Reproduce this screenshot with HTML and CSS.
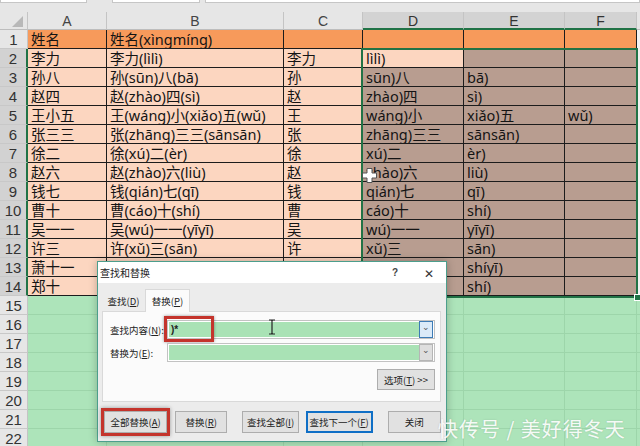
FILE: index.html
```html
<!DOCTYPE html>
<html lang="zh-CN">
<head>
    <meta charset="UTF-8">
    <meta name="viewport" content="width=device-width, initial-scale=1.0">
    <title>查找和替换 - 拼音拆分</title>
    <link rel="stylesheet" href="styles.css">
</head>
<body>
    <div class="app">
        <div class="toolbar">
            <span class="box name-box"></span>
            <span class="box fx-box"></span>
            <span class="box formula-box"></span>
        </div>

        <div class="grid" id="grid">
            <!-- cells are built by the script below -->
        </div>

        <div class="selection"><span class="fill-handle"></span></div>

        <svg class="move-cursor" width="15" height="15" viewBox="0 0 15 15">
            <path d="M5 0.5h5v4.5h4.5v5H10v4.5H5V10H0.5V5H5z" fill="#fff" stroke="#555" stroke-width="1"/>
        </svg>

        <div class="dialog">
            <div class="dialog-title">
                <span class="dialog-name">查找和替换</span>
                <span class="dialog-help">?</span>
                <span class="dialog-close">✕</span>
            </div>
            <div class="dialog-body">
                <div class="tabs">
                    <span class="tab">查找(<u>D</u>)</span>
                    <span class="tab tab-active">替换(<u>P</u>)</span>
                </div>
                <div class="panel">
                    <div class="field">
                        <label class="field-label">查找内容(<u>N</u>):</label>
                        <div class="input">
                            <span class="input-text">)*</span>
                            <span class="drop drop-focus">⌄</span>
                            <span class="mark-box"></span>
                            <svg class="ibeam" width="8" height="16" viewBox="0 0 8 16">
                                <path d="M1 1h2.5l0.5 1 0.5-1H7M4 2v12M1 15h2.5l0.5-1 0.5 1H7" fill="none" stroke="#222" stroke-width="1.2"/>
                            </svg>
                        </div>
                    </div>
                    <div class="field">
                        <label class="field-label">替换为(<u>E</u>):</label>
                        <div class="input">
                            <span class="input-text"></span>
                            <span class="drop">⌄</span>
                        </div>
                    </div>
                    <div class="options-row">
                        <button class="btn btn-options">选项(<u>T</u>) &gt;&gt;</button>
                    </div>
                </div>
                <div class="actions">
                    <button class="btn btn-replace-all">全部替换(<u>A</u>)</button>
                    <button class="btn btn-replace">替换(<u>R</u>)</button>
                    <button class="btn btn-find-all">查找全部(<u>I</u>)</button>
                    <button class="btn btn-find-next">查找下一个(<u>F</u>)</button>
                    <button class="btn btn-close">关闭</button>
                </div>
            </div>
        </div>

        <div class="watermark">快传号 / 美好得冬天</div>
    </div>

    <script>
        // rows 13-14 of B:D sit under the dialog, so they are left empty here
        const rows = [
            ['姓名', '姓名(xìngmíng)', '', '', '', ''],
            ['李力', '李力(lìlì)', '李力', 'lìlì)', '', ''],
            ['孙八', '孙(sūn)八(bā)', '孙', 'sūn)八', 'bā)', ''],
            ['赵四', '赵(zhào)四(sì)', '赵', 'zhào)四', 'sì)', ''],
            ['王小五', '王(wáng)小(xiǎo)五(wǔ)', '王', 'wáng)小', 'xiǎo)五', 'wǔ)'],
            ['张三三', '张(zhāng)三三(sānsān)', '张', 'zhāng)三三', 'sānsān)', ''],
            ['徐二', '徐(xú)二(èr)', '徐', 'xú)二', 'èr)', ''],
            ['赵六', '赵(zhào)六(liù)', '赵', 'zhào)六', 'liù)', ''],
            ['钱七', '钱(qián)七(qī)', '钱', 'qián)七', 'qī)', ''],
            ['曹十', '曹(cáo)十(shí)', '曹', 'cáo)十', 'shí)', ''],
            ['吴一一', '吴(wú)一一(yīyī)', '吴', 'wú)一一', 'yīyī)', ''],
            ['许三', '许(xǔ)三(sān)', '许', 'xǔ)三', 'sān)', ''],
            ['萧十一', '', '', '', 'shíyī)', ''],
            ['郑十', '', '', '', 'shí)', '']
        ];
        const letters = ['A', 'B', 'C', 'D', 'E', 'F', ''];

        function cellClass(r, c) {
            if (r > rows.length) return 'cell empty';
            if (c === 6) return 'cell blank';
            if (r === 1) return 'cell title';
            if (c >= 3) return (r === 2 && c === 3) ? 'cell data' : 'cell picked';
            return 'cell data';
        }

        let html = '<div class="corner"><span class="corner-mark"></span></div>';
        letters.forEach((l, i) => {
            html += `<div class="col-head${i >= 3 && i <= 5 ? ' sel' : ''}">${l}</div>`;
        });

        for (let r = 1; r <= 22; r++) {
            const picked = r >= 2 && r <= rows.length;
            html += `<div class="row-head${picked ? ' sel' : ''}">${r}</div>`;
            for (let c = 0; c < 7; c++) {
                const text = rows[r - 1] ? (rows[r - 1][c] || '') : '';
                html += `<div class="${cellClass(r, c)}">${text}</div>`;
            }
        }

        document.getElementById('grid').innerHTML = html;
    </script>
</body>
</html>
```

FILE: styles.css
```css
* {
    margin: 0;
    padding: 0;
    box-sizing: border-box;
}

body {
    font-family: 'Noto Sans CJK SC', sans-serif;
    background: #e6e6e6;
    color: #111;
}

.app {
    position: relative;
    width: 640px;
    height: 446px;
    overflow: hidden;
}

/* formula bar remains */
.toolbar {
    height: 12px;
    display: flex;
    align-items: flex-start;
    background: #e6e6e6;
}

.box {
    height: 3px;
    background: #fff;
    border: 1px solid #c6c6c6;
    border-top: none;
}

.name-box {
    width: 87px;
}

.fx-box {
    width: 88px;
    margin-left: 25px;
}

.formula-box {
    flex: 1;
    margin-left: 5px;
}

/* sheet */
.grid {
    display: grid;
    grid-template-columns: 28px 79px 177px 79px 101px 101px 72px 1fr;
    grid-template-rows: 18px;
    grid-auto-rows: 19px;
}

.corner {
    position: relative;
    background: #e6e6e6;
    border-right: 1px solid #c4c4c4;
    border-bottom: 1px solid #bdbdbd;
}

.corner-mark {
    position: absolute;
    right: 4px;
    bottom: 2px;
    width: 0;
    height: 0;
    border-left: 11px solid transparent;
    border-bottom: 11px solid #b8b8b8;
}

.col-head {
    background: #e6e6e6;
    border-right: 1px solid #c4c4c4;
    border-bottom: 1px solid #bdbdbd;
    font-family: 'Liberation Sans', sans-serif;
    font-size: 14px;
    line-height: 18px;
    text-align: center;
    color: #444;
}

.col-head.sel {
    background: #d3d3d3;
    border-bottom: 2px solid #217346;
    color: #333;
}

.row-head {
    background: #e6e6e6;
    border-right: 1px solid #c4c4c4;
    border-bottom: 1px solid #c8c8c8;
    font-family: 'Liberation Sans', sans-serif;
    font-size: 15px;
    line-height: 19px;
    text-align: center;
    color: #333;
}

.row-head.sel {
    background: #d2d2d2;
    border-right: 2px solid #217346;
}

.cell {
    border-right: 1px solid #1c1c1c;
    border-bottom: 1px solid #1c1c1c;
    font-family: 'Noto Sans', 'Noto Sans CJK SC', sans-serif;
    font-size: 14.5px;
    line-height: 19px;
    padding-left: 3px;
    white-space: nowrap;
    overflow: hidden;
    color: #141414;
}

.cell.title {
    background: #f79a5b;
}

.cell.data {
    background: #fcd6c0;
}

.cell.picked {
    background: #b89d90;
}

.cell.blank {
    background: #f2f2f2;
    border: none;
}

.cell.empty {
    background: #ade4ba;
    border-right: 1px solid #9dd5aa;
    border-bottom: 1px solid #9dd5aa;
}

/* selected range D2:F14 */
.selection {
    position: absolute;
    left: 361px;
    top: 48px;
    width: 277px;
    height: 250px;
    border: 2px solid #217346;
}

.fill-handle {
    position: absolute;
    right: -5px;
    bottom: -5px;
    width: 7px;
    height: 7px;
    background: #217346;
    border: 1px solid #fff;
}

.move-cursor {
    position: absolute;
    left: 362px;
    top: 168px;
}

/* find & replace dialog */
.dialog {
    position: absolute;
    left: 97px;
    top: 261px;
    width: 350px;
    height: 181px;
    display: flex;
    flex-direction: column;
    background: #ececec;
    border: 1px solid #4c9e8c;
    box-shadow: 0 0 8px rgba(0, 0, 0, 0.25);
    font-size: 9.5px;
    color: #222;
}

.dialog u {
    text-decoration: underline;
}

.dialog-title {
    height: 21px;
    display: flex;
    align-items: center;
    background: #fff;
    padding-left: 2px;
}

.dialog-name {
    flex: 1;
    font-size: 10px;
}

.dialog-help,
.dialog-close {
    width: 34px;
    text-align: center;
}

.dialog-help {
    font-family: 'Liberation Sans', sans-serif;
    font-weight: bold;
    font-size: 10px;
    color: #444;
}

.dialog-close {
    font-size: 12px;
    color: #333;
}

.dialog-body {
    flex: 1;
    padding: 6px 5px 0 4px;
}

.tabs {
    height: 22px;
    display: flex;
    align-items: flex-end;
}

.tab {
    width: 43px;
    height: 19px;
    line-height: 18px;
    text-align: center;
}

.tab-active {
    width: 45px;
    height: 23px;
    line-height: 22px;
    margin-bottom: -1px;
    background: #fbfbfb;
    border: 1px solid #d9d9d9;
    border-bottom: none;
    position: relative;
}

.panel {
    height: 91px;
    background: #fbfbfb;
    border: 1px solid #d9d9d9;
    padding: 8px 5px 0 7px;
}

.field {
    display: flex;
    align-items: center;
    height: 19px;
    margin-bottom: 4px;
}

.field-label {
    width: 57px;
}

.input {
    position: relative;
    flex: 1;
    height: 19px;
    display: flex;
    align-items: center;
    justify-content: space-between;
    background: #a9e2b5;
    border: 1px solid #c2c2c2;
    box-shadow: inset 0 0 0 1px #fff;
}

.input-text {
    padding-left: 3px;
    font-weight: bold;
    font-family: 'Liberation Sans', sans-serif;
    font-size: 10px;
}

.drop {
    width: 14px;
    height: 17px;
    margin-right: 1px;
    background: #dedede;
    border: 1px solid #b5b5b5;
    font-size: 9px;
    line-height: 9px;
    text-align: center;
    color: #555;
}

.drop-focus {
    background: #dbeaf8;
    border: 1px solid #3d7bb5;
}

.mark-box {
    position: absolute;
    left: -4px;
    top: -5px;
    width: 50px;
    height: 26px;
    border: 3px solid #c4342c;
    box-shadow: 0 0 3px rgba(0, 0, 0, 0.4);
}

.ibeam {
    position: absolute;
    left: 100px;
    top: -2px;
}

.options-row {
    display: flex;
    justify-content: flex-end;
    margin-top: 7px;
}

.btn {
    height: 22px;
    background: #e1e1e1;
    border: 1px solid #adadad;
    font-family: 'Noto Sans CJK SC', sans-serif;
    font-size: 9.5px;
    color: #222;
}

.btn-options {
    width: 58px;
    height: 21px;
}

.actions {
    display: flex;
    align-items: center;
    margin-top: 9px;
    padding-left: 2px;
}

.btn-replace-all {
    width: 64px;
    box-shadow: 0 0 0 3px #c4342c, 0 0 4px 3px rgba(0, 0, 0, 0.35);
}

.btn-replace {
    width: 53px;
    margin-left: 8px;
}

.btn-find-all {
    width: 57px;
    margin-left: 15px;
}

.btn-find-next {
    width: 68px;
    margin-left: 7px;
    border: 2px solid #0f6fc6;
}

.btn-close {
    width: 54px;
    margin-left: 15px;
}

.watermark {
    position: absolute;
    left: 438px;
    top: 414px;
    font-size: 20px;
    letter-spacing: 1px;
    color: rgba(255, 255, 255, 0.92);
    text-shadow: 0 0 2px rgba(0, 0, 0, 0.15);
    white-space: nowrap;
}
```
